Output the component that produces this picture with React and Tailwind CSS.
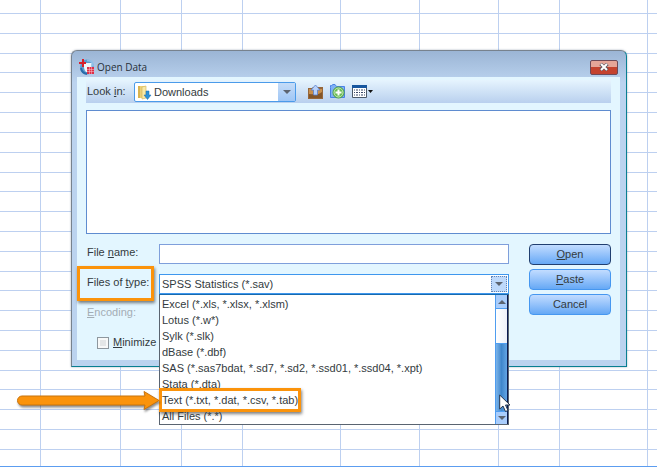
import React from "react";

const columns = [
  "w-[41px]", "w-[80px]", "w-[61px]", "w-[61px]", "w-[98px]",
  "w-[79px]", "w-[79px]", "w-[61px]", "w-[88px]",
];

const fileTypes = [
  "Excel (*.xls, *.xlsx, *.xlsm)",
  "Lotus (*.w*)",
  "Sylk (*.slk)",
  "dBase (*.dbf)",
  "SAS (*.sas7bdat, *.sd7, *.sd2, *.ssd01, *.ssd04, *.xpt)",
  "Stata (*.dta)",
  "Text (*.txt, *.dat, *.csv, *.tab)",
  "All Files (*.*)",
];

function SheetGrid() {
  return (
    <div aria-hidden="true" className="absolute inset-0 overflow-hidden border-b border-[#5c9df0]">
      <div className="absolute inset-0 flex">
        {columns.map((w, i) => (
          <div key={i} className={`${w} shrink-0 border-r border-[#bdd0f0]`} />
        ))}
      </div>
      <div className="absolute inset-0 flex flex-col">
        <div className="h-[14px] border-b border-[#bdd0f0]" />
        {Array.from({ length: 22 }, (_, i) => (
          <div key={i} className="flex-1 border-b border-[#bdd0f0]" />
        ))}
        <div className="h-4" />
      </div>
    </div>
  );
}

function Arrow({ up = false }) {
  return (
    <svg width="8" height="4" viewBox="0 0 8 4" aria-hidden="true">
      <path d={up ? "M0 4 4 0 8 4Z" : "M0 0h8L4 4Z"} fill="#5c6470" />
    </svg>
  );
}

function AppIcon() {
  return (
    <svg width="16" height="16" viewBox="0 0 16 16" aria-hidden="true">
      <ellipse cx="8" cy="8" rx="7" ry="7.500" fill="#5b9bd0" />
      <path d="M8 1.500c4-.5 6.500 2 6 6" fill="none" stroke="#8fc0e6" strokeWidth="2" />
      <path d="M5 4h7.500v9H7C5 11 4.500 7 5 4Z" fill="#eef5fb" />
      <path d="M2 9c.5 3.500 3 5.500 6 6" stroke="#2a6cab" strokeWidth="2" fill="none" />
      <path d="M4 0v8M0 4h7" stroke="#d6202d" strokeWidth="2" />
      <rect x="8" y="8" width="7" height="7" fill="#dd3048" />
      <path d="M8 10.500h7M8 12.500h7M10.500 8v7M12.500 8v7" stroke="#f8c4cc" strokeWidth=".5" />
    </svg>
  );
}

function FolderIcon() {
  return (
    <svg width="15" height="15" viewBox="0 0 15 15" aria-hidden="true">
      <path d="M1 1h7v12H1Z" fill="#ecd078" />
      <path d="M1 1h2v12H1Z" fill="#d9b44f" />
      <path d="M5 2 9 1v12l-4 1Z" fill="#f9e9a6" stroke="#d1b158" strokeWidth=".6" />
      <path d="M9 6h3v4h2l-3.500 4.500L7 10h2Z" fill="#2c91d8" stroke="#1b6cae" strokeWidth=".5" />
    </svg>
  );
}

function UpFolderIcon() {
  return (
    <svg width="15" height="14" viewBox="0 0 15 14" aria-hidden="true">
      <path d="M0 3h4l1-1h10v12H0Z" fill="#96663a" />
      <path d="M1 4h13v5H1Z" fill="#c98f4c" />
      <path d="M1 9c5 2 9 1 13-2v6H1Z" fill="#845527" />
      <path d="M7.500 0 12 5H9.500v5h-4V5H3Z" fill="#b9d2fb" stroke="#5a7fca" strokeWidth=".8" />
    </svg>
  );
}

function NewFolderIcon() {
  return (
    <svg width="15" height="15" viewBox="0 0 15 15" aria-hidden="true">
      <path d="M.5 3.500V1.500h1L3 .5h2l1.500 2H14.500v11H.5Z" fill="#7fb0f5" stroke="#4a82e4" />
      <circle cx="8.500" cy="8.500" r="5.500" fill="#6cbd57" stroke="#4d9d42" />
      <circle cx="8.500" cy="8.500" r="4.500" fill="none" stroke="#c4e9b2" />
      <path d="M8.500 5.500v6M5.500 8.500h6" stroke="#fff" strokeWidth="2" />
    </svg>
  );
}

function ViewIcon() {
  return (
    <svg width="22" height="13" viewBox="0 0 22 13" aria-hidden="true">
      <path d="M.5.5h14v12H.5Z" fill="#fff" stroke="#4c5968" />
      <path d="M0 0h15v3H0Z" fill="#17569f" />
      <path d="M2 5h11M2 7.500h11M2 10h11" stroke="#3b4868" strokeWidth="1.200" strokeDasharray="1 1 2 1" />
      <path d="M16 5h5l-2.500 3Z" fill="#111" />
    </svg>
  );
}

function PushButton({ children, isDefault = false }) {
  return (
    <button
      type="button"
      className={`h-[21px] rounded border bg-gradient-to-b from-[#c2dcff] to-[#65a8f5] text-center leading-[19px] ${
        isDefault ? "border-[#213f70]" : "border-[#4697f0]"
      }`}
    >
      {children}
    </button>
  );
}

function Callout({ className }) {
  return (
    <span
      aria-hidden="true"
      className={`pointer-events-none absolute border-3 border-[#fb930b] shadow-[1px_2px_3px_rgba(0,0,0,0.5)] ${className}`}
    />
  );
}

function PointerArrow() {
  return (
    <svg
      className="pointer-events-none absolute top-1/2 right-full -translate-y-1/2 overflow-visible drop-shadow-[1px_2px_1px_rgba(0,0,0,0.45)]"
      width="143"
      height="20"
      viewBox="0 0 143 20"
      aria-hidden="true"
    >
      <path
        d="M5 6H128L127 1.500 142 10.500 127 19.500 128 15H5A4.500 4.500 0 0 1 5 6Z"
        fill="#fb930b"
        stroke="#c9740c"
        strokeLinejoin="round"
      />
    </svg>
  );
}

function FileTypeList() {
  return (
    <div className="absolute top-full right-0 left-0 z-10 flex border border-[#5a6470] border-t-[#176aae] bg-white">
      <ul role="listbox" aria-label="Files of type" className="min-w-0 flex-1 pt-px">
        {fileTypes.map((type) => {
          const marked = type.startsWith("Text");
          return (
            <li
              key={type}
              role="option"
              aria-selected={marked}
              className="relative h-4 pl-[2px] leading-4 whitespace-nowrap"
            >
              {type}
              {marked && (
                <>
                  <Callout className="-top-1 -left-px h-6 w-[142px]" />
                  <PointerArrow />
                </>
              )}
            </li>
          );
        })}
      </ul>
      <div className="relative flex w-[13px] flex-col border-r border-[#0a1a50] bg-[#4f9df0] pl-px">
        <button type="button" aria-label="Scroll up" className="flex h-[13px] items-center justify-center bg-[#a9cdfc]">
          <Arrow up />
        </button>
        <div className="mt-px h-[34px] bg-gradient-to-r from-white to-[#eef0f8]" />
        <div className="mt-px flex-1 bg-gradient-to-r from-[#7bb4ea] via-[#3f86cb] to-[#63a5e4]" />
        <button type="button" aria-label="Scroll down" className="mt-px flex h-3 items-center justify-center bg-[#a9cdfc]">
          <Arrow />
        </button>
        <svg
          className="pointer-events-none absolute bottom-[11px] left-[4px]"
          width="12"
          height="19"
          viewBox="0 0 12 19"
          aria-hidden="true"
        >
          <path d="M.7 1v14l3.300-3 2.500 5.500 2.500-1L6.500 11H11Z" fill="#fff" stroke="#26344c" />
        </svg>
      </div>
    </div>
  );
}

export default function App() {
  const label = "relative flex h-5 w-[73px] shrink-0 items-center pb-[3px] pl-px whitespace-nowrap";
  return (
    <div className="relative min-h-screen overflow-hidden bg-white pt-[50px] pr-[30px] pl-[71px] font-['Liberation_Sans',Arial,sans-serif] text-[11px] text-[#333b40]">
      <SheetGrid />
      <section
        aria-labelledby="dialog-title"
        className="relative rounded-t-md border border-t-[#77828e] border-r-[#087f91] border-b-[#087f91] border-l-[#77828e] bg-gradient-to-b from-[#9bb5d5] to-[#bbd3ef] to-10% pr-[6px] pb-[6px] pl-[5px] shadow-[0_0_2px_rgba(60,80,110,0.5)]"
      >
        <header className="flex h-[26px] items-center pt-[6px] pr-[2px] pl-[2px]">
          <AppIcon />
          <h1 id="dialog-title" className="ml-[2px] flex-1 font-['Open_Sans','Noto_Sans',sans-serif] text-[10px] leading-4 text-[#283038]">
            Open Data
          </h1>
          <button
            type="button"
            aria-label="Close"
            className="flex h-[15px] w-7 items-center justify-center rounded-xs border border-[#6d4a58] bg-gradient-to-b from-[#e5a598] from-45% to-[#c4432f] to-50%"
          >
            <svg width="10" height="8" viewBox="0 0 10 8" aria-hidden="true">
              <path d="M1.500 1 8.500 7M8.500 1 1.500 7" stroke="#5a5560" strokeWidth="3.500" />
              <path d="M2 1 8 7M8 1 2 7" stroke="#fff" strokeWidth="2" />
            </svg>
          </button>
        </header>

        <div className="bg-[#e3f6ff] px-[9px] pt-[3px] pb-[9px]">
          <div className="flex h-[23px] items-center bg-gradient-to-b from-[#e6f4fe] to-[#b9d0ee]">
            <label htmlFor="look-in" className="w-12 pl-px">
              Look <u>i</u>n:
            </label>
            <div className="relative h-5 w-[162px]">
              <select
                id="look-in"
                className="block h-5 w-full appearance-none rounded-xs border border-[#4b9bea] bg-white pr-5 pl-[19px] text-[11px] leading-4"
              >
                <option>Downloads</option>
              </select>
              <span className="pointer-events-none absolute top-px right-px bottom-px flex w-[17px] items-center justify-center bg-gradient-to-b from-[#c5dcf8] to-[#9fc6f5]">
                <Arrow />
              </span>
              <span className="pointer-events-none absolute top-[3px] left-[3px]">
                <FolderIcon />
              </span>
            </div>
            <div className="ml-3 flex items-center gap-[7px]">
              <button type="button" aria-label="Up one level"><UpFolderIcon /></button>
              <button type="button" aria-label="New folder"><NewFolderIcon /></button>
              <button type="button" aria-label="View menu"><ViewIcon /></button>
            </div>
          </div>

          <div role="listbox" aria-label="Files" className="mt-[7px] h-[124px] border border-[#5f8cd0] bg-white" />

          <div className="mt-[10px] flex gap-5">
            <div className="flex min-w-0 flex-1 flex-col gap-[10px]">
              <div className="flex">
                <label htmlFor="file-name" className={label}>
                  <span>File <u>n</u>ame:</span>
                </label>
                <input id="file-name" type="text" className="h-5 min-w-0 flex-1 border border-[#7f9fdb] bg-white px-1" />
              </div>
              <div className="flex">
                <label htmlFor="file-type" className={label}>
                  <span>Files of <u>t</u>ype:</span>
                  <Callout className="-top-2 -left-[9px] h-[35px] w-[77px]" />
                </label>
                <div className="relative h-5 min-w-0 flex-1">
                  <select
                    id="file-type"
                    className="block h-5 w-full appearance-none border border-[#3e97ee] bg-white pr-5 pl-[2px] text-[11px] leading-4"
                  >
                    <option>SPSS Statistics (*.sav)</option>
                  </select>
                  <span className="pointer-events-none absolute top-[2px] right-[2px] bottom-[2px] flex w-4 items-center justify-center border border-dotted border-[#6484b4] bg-[#bdd9fb]">
                    <Arrow />
                  </span>
                  <FileTypeList />
                </div>
              </div>
              <div className={`${label} text-[#a3adb5]`}>
                <span><u>E</u>ncoding:</span>
              </div>
              <label className="flex h-[17px] items-center gap-1 pl-[11px]">
                <input
                  type="checkbox"
                  className="size-3 appearance-none border border-[#8e979e] bg-[#e4e6e7] shadow-[inset_0_0_0_2px_#f7f8f8]"
                />
                <span><u>M</u>inimize</span>
              </label>
            </div>
            <div className="flex w-[82px] flex-col gap-1">
              <PushButton isDefault><u>O</u>pen</PushButton>
              <PushButton><u>P</u>aste</PushButton>
              <PushButton>Cancel</PushButton>
            </div>
          </div>
        </div>
      </section>
    </div>
  );
}
